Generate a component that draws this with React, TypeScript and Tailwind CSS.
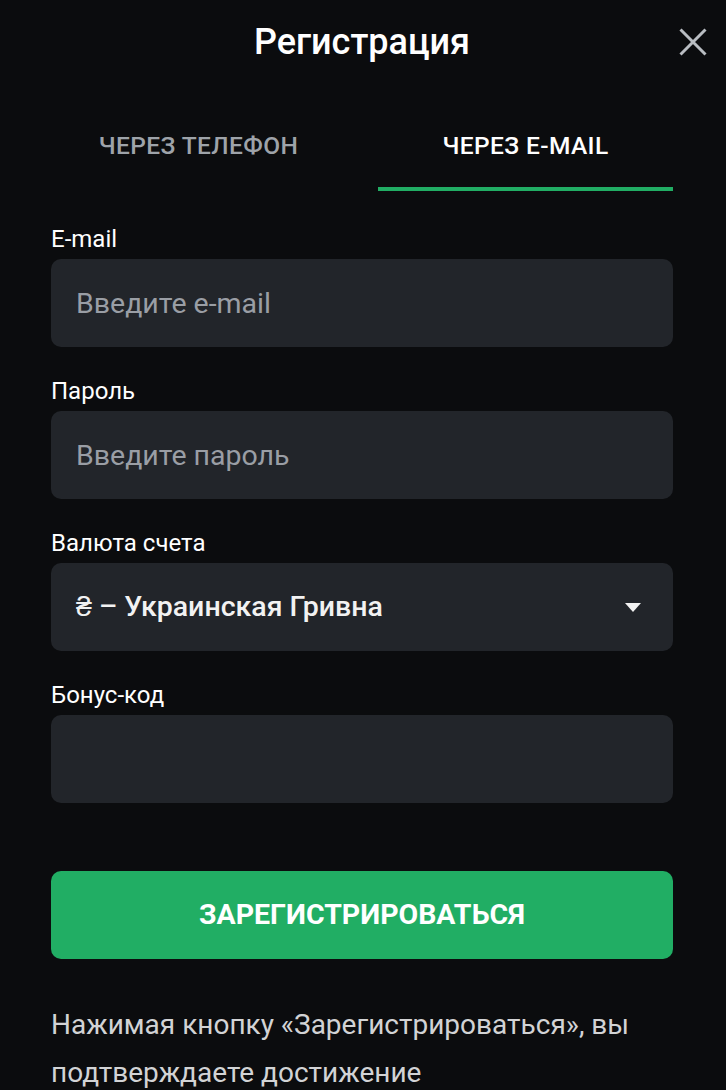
import React, { useState } from 'react';

const Field = ({ label, children }: { label: string; children: React.ReactNode }) => (
  <div className="flex flex-col">
    <label className="text-[24px] leading-[28px] text-white mb-[6px]">{label}</label>
    {children}
  </div>
);

const inputCls =
  'h-[88px] w-full rounded-[10px] bg-[#22252a] px-[25px] text-[28.5px] text-white outline-none placeholder:text-[#9a9ea5]';

export default function App() {
  const [tab, setTab] = useState<'phone' | 'email'>('email');
  return (
    <div className="min-h-screen overflow-hidden bg-[#0b0c0e] pl-[51px] pr-[53px] pb-10 font-['Roboto',sans-serif] text-white">
      <div className="relative flex h-[84px] items-center justify-center">
        <h1 className="text-[36px] font-medium">Регистрация</h1>
        <button className="absolute right-[-34px] top-[28px] h-[28px] w-[28px] text-[#b9bdc2]" aria-label="Закрыть">
          <svg viewBox="0 0 28 28" className="h-full w-full" fill="none" stroke="currentColor" strokeWidth="3">
            <path d="M1.5 1.5 26.5 26.5M26.5 1.5 1.5 26.5" />
          </svg>
        </button>
      </div>

      <div className="mt-[22px] flex gap-[32px]">
        <button
          onClick={() => setTab('phone')}
          className={`h-[85px] flex-1 border-b-4 text-[24.5px] font-medium uppercase tracking-[0.4px] ${
            tab === 'phone' ? 'border-[#21ae64] text-white' : 'border-transparent text-[#9ea3a9]'
          }`}
        >
          Через телефон
        </button>
        <button
          onClick={() => setTab('email')}
          className={`h-[85px] flex-1 border-b-4 text-[24.5px] font-medium uppercase tracking-[0.4px] ${
            tab === 'email' ? 'border-[#21ae64] text-white' : 'border-transparent text-[#9ea3a9]'
          }`}
        >
          Через e-mail
        </button>
      </div>

      <form className="mt-[34px] flex flex-col gap-[30px]" onSubmit={(e) => e.preventDefault()}>
        <Field label="E-mail">
          <input type="email" placeholder="Введите e-mail" className={inputCls} />
        </Field>
        <Field label="Пароль">
          <input type="password" placeholder="Введите пароль" className={inputCls} />
        </Field>
        <Field label="Валюта счета">
          <button type="button" className="flex h-[88px] w-full items-center justify-between rounded-[10px] bg-[#22252a] pl-[25px] pr-[32px] text-[28.5px] font-medium text-[#f2f2f2]">
            <span>₴ – Украинская Гривна</span>
            <svg viewBox="0 0 16 9" className="h-[9px] w-[16px]" fill="currentColor">
              <path d="M0 0h16L8 9z" />
            </svg>
          </button>
        </Field>
        <Field label="Бонус-код">
          <input type="text" className={inputCls} />
        </Field>

        <button
          type="submit"
          className="mt-[38px] h-[88px] w-full rounded-[10px] bg-[#21ae64] text-[28.5px] font-bold uppercase text-white"
        >
          Зарегистрироваться
        </button>
      </form>

      <p className="mt-[42px] text-[28px] leading-[48px] text-[#d2d3d5]">
        Нажимая кнопку «Зарегистрироваться», вы подтверждаете достижение
        <br />
        совершеннолетия и согласие с правилами
      </p>
    </div>
  );
}
